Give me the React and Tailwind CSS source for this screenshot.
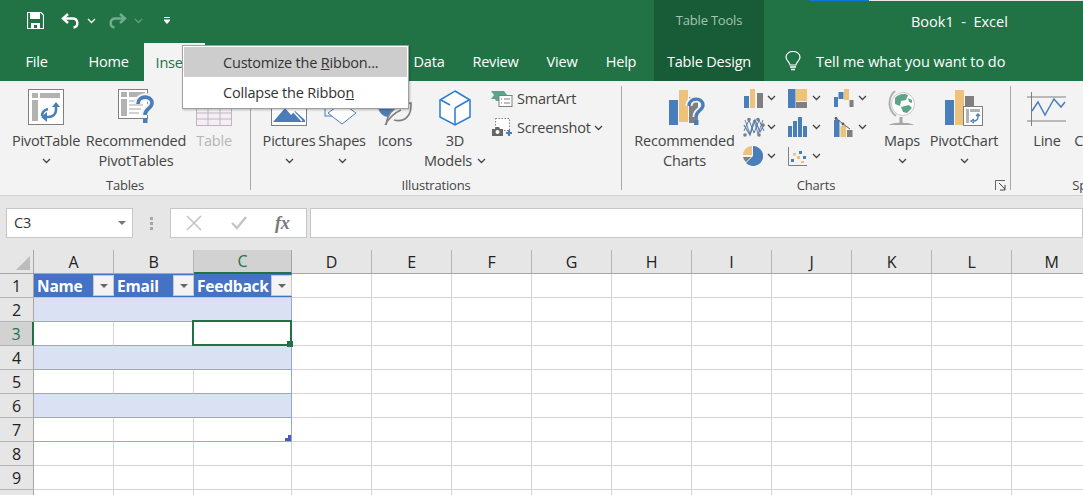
import React from "react";

const blue = "#4a7eba";
const gold = "#edc27b";
const gray = "#7f7f7f";

const Chev = ({ className = "", color = "#444" }) => (
  <svg width="9" height="6" viewBox="0 0 9 6" className={className}>
    <path d="M1 1l3.5 3.5L8 1" fill="none" stroke={color} strokeWidth="1.3" />
  </svg>
);

const SaveIcon = () => (
  <svg width="17" height="17" viewBox="0 0 17 17">
    <path d="M0.5 0.5h13.5l2.5 2.5v13.5h-16z" fill="none" stroke="#fff" strokeWidth="1.2" />
    <rect x="3" y="1" width="10" height="6" fill="#fff" />
    <path d="M4 16.5v-5.5h9v5.5h-3v-3.5h-3v3.5z" fill="#fff" />
  </svg>
);

const UndoIcon = ({ color = "#fff", flip = false, opacity = 1 }) => (
  <svg width="19" height="16" viewBox="0 0 19 16" opacity={opacity} className={flip ? "-scale-x-100" : ""}>
    <path d="M7 1L2 5.5 7 10" fill="none" stroke={color} strokeWidth="2.4" />
    <path d="M2.5 5.5h9c6 0 6.5 8 1 9" fill="none" stroke={color} strokeWidth="2.4" />
  </svg>
);

const PivotTableIcon = () => (
  <svg width="37" height="37" viewBox="0 0 37 37">
    <rect x="0.5" y="0.5" width="35" height="35" fill="#fff" stroke={gray} />
    <rect x="4" y="4" width="6" height="5" fill="#b2b2b2" />
    <rect x="12" y="4" width="20" height="5" fill="#b2b2b2" />
    <rect x="4" y="11" width="6" height="21" fill="#b2b2b2" />
    <path d="M28 15v6c0 4-3 7-8 7h-3" fill="none" stroke={blue} strokeWidth="2.6" />
    <path d="M24 18l4-5 4 5zM19 23l-6 5 6 5z" fill={blue} />
    <path d="M14 27c0-3 2-6 6-7" fill="none" stroke={blue} strokeWidth="2.6" />
  </svg>
);

const RecPivotIcon = () => (
  <svg width="37" height="37" viewBox="0 0 37 37">
    <rect x="0.5" y="0.5" width="29" height="29" fill="#fff" stroke={gray} />
    <rect x="3" y="3" width="6" height="5" fill="#b2b2b2" />
    <rect x="11" y="3" width="16" height="5" fill="#b2b2b2" />
    <rect x="3" y="10" width="6" height="17" fill="#b2b2b2" />
    <path d="M11 12h14M11 16h14M11 20h12M11 24h10" stroke="#c4c4c4" strokeWidth="1.5" />
    <path d="M20 15c0-9 14-9 14-1 0 6-7 5-7 12" fill="none" stroke="#f3f3f3" strokeWidth="8" />
    <path d="M20 15c0-9 14-9 14-1 0 6-7 5-7 12" fill="none" stroke={blue} strokeWidth="3.6" />
    <rect x="25" y="29" width="4.5" height="5" fill={blue} />
  </svg>
);

const TableIcon = () => (
  <svg width="36" height="28" viewBox="0 0 36 28">
    <rect x="0.5" y="0.5" width="35" height="27" fill="#f5eff5" stroke="#bdb6bd" />
    <path d="M0 9h36M0 15h36M0 21h36M12 5v23M24 5v23" stroke="#bdb6bd" />
  </svg>
);

const PicturesIcon = () => (
  <svg width="36" height="36" viewBox="0 0 36 36">
    <rect x="0.5" y="0.5" width="35" height="35" fill="#fff" stroke={gray} />
    <path d="M2 32l12-14 6 7 4-4 10 9v2H2z" fill={blue} />
    <path d="M20 19l11 12" stroke="#fff" strokeWidth="1.5" />
  </svg>
);

const ShapesIcon = () => (
  <svg width="36" height="36" viewBox="0 0 36 36">
    <rect x="1" y="10" width="16" height="16" fill="none" stroke={blue} />
    <path d="M18 13l14 10-14 11L4 23z" fill="#fff" stroke={blue} />
  </svg>
);

const IconsIcon = () => (
  <svg width="36" height="36" viewBox="0 0 36 36">
    <circle cx="12" cy="16" r="11" fill={blue} />
    <path d="M9 35C11 20 20 15 34 13c1 12-6 20-17 17" fill="#f3f3f3" stroke={gray} strokeWidth="1.6" />
    <path d="M8 35c4-7 9-12 16-15" fill="none" stroke={gray} strokeWidth="1.4" />
  </svg>
);

const CubeIcon = () => (
  <svg width="32" height="36" viewBox="0 0 32 36">
    <path d="M16 1l15 9v17l-15 8-15-8V10z" fill="#fff" stroke="#2b7cd3" strokeWidth="1.5" />
    <path d="M2 10l9 5M16 18l14-8M16 18v17" fill="none" stroke="#2b7cd3" strokeWidth="1.5" />
  </svg>
);

const SmartArtIcon = () => (
  <svg width="22" height="18" viewBox="0 0 22 18">
    <path d="M0 1h13l3 4h-8v6H5l-1-2H0l3-4z" fill="#5da48a" />
    <rect x="8" y="5.5" width="13" height="11" fill="#fff" stroke={gray} />
    <path d="M10 9h1M13 9h6M10 13h1M13 13h6" stroke={gray} />
  </svg>
);

const ScreenshotIcon = () => (
  <svg width="21" height="19" viewBox="0 0 21 19">
    <rect x="3.5" y="0.5" width="14" height="12" fill="#fff" stroke={gray} strokeDasharray="1.5 1.5" />
    <path d="M0 11h3l1-2h3l1 2h3v7H0z" fill="#666" />
    <circle cx="5.5" cy="14" r="2" fill="#fff" />
    <path d="M17 12v6M14 15h6" stroke={blue} strokeWidth="2" />
  </svg>
);

const RecChartIcon = () => (
  <svg width="37" height="37" viewBox="0 0 37 37" className="ml-[5px]">
    <rect x="0" y="11" width="9" height="25" fill={blue} />
    <rect x="10" y="1" width="9" height="32" fill={gold} />
    <rect x="20" y="8" width="9" height="26" fill={gray} />
    <path d="M20 17c0-9 14-9 14-1 0 6-7 5-7 12" fill="none" stroke="#f3f3f3" strokeWidth="7" />
    <path d="M20 17c0-9 14-9 14-1 0 6-7 5-7 12" fill="none" stroke={blue} strokeWidth="3.4" />
    <rect x="25" y="31" width="4.5" height="5" fill={blue} />
  </svg>
);

const Bars = ({ data }) => (
  <svg width="22" height="20" viewBox="0 0 22 20">
    {data.map(([x, y, w, c], i) => (
      <rect key={i} x={x} y={y} width={w} height={20 - y} fill={c} />
    ))}
  </svg>
);

const smallCharts = [
  [
    <Bars data={[[1, 8, 5, blue], [7, 1, 5, gold], [14, 5, 6, gray]]} />,
    <svg width="19" height="19" viewBox="0 0 19 19">
      <rect width="7.5" height="19" fill={blue} />
      <rect x="8" width="11" height="12" fill={gold} />
      <rect x="8" y="13" width="11" height="6" fill={gray} />
    </svg>,
    <svg width="20" height="18" viewBox="0 0 20 18">
      <rect x="0" y="8" width="4" height="10" fill={blue} />
      <rect x="4.5" y="3" width="5" height="7" fill={blue} />
      <rect x="10" y="0" width="5" height="11" fill={gold} />
      <rect x="15.5" y="11" width="4" height="7" fill={gray} />
    </svg>,
  ],
  [
    <svg width="22" height="20" viewBox="0 0 22 20">
      <path d="M2 3l5 14 4-14 4 14 5-14" fill="none" stroke={gray} />
      <path d="M1 8l6 10 5-15 5 12 4-7" fill="none" stroke={blue} strokeWidth="1.2" />
      <path d="M1 14l5-11 5 13 5-13 5 11" fill="none" stroke={blue} />
      <circle cx="6" cy="2.5" r="1.8" fill={gray} />
      <circle cx="15" cy="2.5" r="1.8" fill={gray} />
      <circle cx="20" cy="8" r="1.8" fill={gray} />
      <circle cx="2" cy="18" r="1.8" fill={gray} />
      <circle cx="16" cy="18" r="1.8" fill={gray} />
    </svg>,
    <Bars data={[[0, 9, 4, blue], [5, 4, 4, blue], [10, 0, 4, blue], [15, 9, 4, blue]]} />,
    <svg width="19" height="20" viewBox="0 0 19 20">
      <rect x="0" y="3" width="5.5" height="17" fill={blue} />
      <rect x="6.5" y="9" width="5.5" height="11" fill={gold} />
      <rect x="13" y="13" width="5.5" height="7" fill={gray} />
      <path d="M2 1l7 6 7 5" fill="none" stroke="#595959" />
      <circle cx="2" cy="1.5" r="1.4" fill="#595959" />
      <circle cx="9" cy="7" r="1.4" fill="#595959" />
    </svg>,
  ],
  [
    <svg width="20" height="20" viewBox="0 0 20 20">
      <path d="M10 0a10 10 0 1 1-7 17l7-7z" fill={blue} />
      <path d="M9 0v9H0a9 9 0 0 1 9-9z" fill={gold} />
      <path d="M0 11h8l-5 5a9 9 0 0 1-3-5z" fill={gray} />
    </svg>,
    <svg width="19" height="19" viewBox="0 0 19 19">
      <path d="M0.5 0v18.5H19" fill="none" stroke={gray} />
      <rect x="3" y="12" width="3" height="3" fill={blue} />
      <rect x="5" y="6" width="3" height="2.5" fill={gold} />
      <rect x="9" y="9" width="3" height="3" fill={gold} />
      <rect x="11" y="4" width="3" height="3" fill={blue} />
      <rect x="15" y="9" width="3" height="3" fill={blue} />
      <rect x="13" y="14" width="3" height="2" fill={gold} />
    </svg>,
    null,
  ],
];

const MapsIcon = () => (
  <svg width="30" height="36" viewBox="0 0 30 36">
    <circle cx="16" cy="14" r="11.5" fill="#fff" stroke="#c8c8c8" />
    <path d="M8 8c3-4 9-5 13-3l-2 5-5 1-1 5-5-2zM14 17l8-2 3 3-5 5-4-1zM21 8l4 2v3l-3-1z" fill="#5da48a" />
    <path d="M8 1C1 7 0 19 9 26" fill="none" stroke="#b0b0b0" strokeWidth="2" />
    <path d="M14 27v6" stroke="#a6a6a6" strokeWidth="3" />
    <path d="M2 35c3-3 21-3 25 0z" fill="#a6a6a6" />
  </svg>
);

const PivotChartIcon = () => (
  <svg width="39" height="37" viewBox="0 0 39 37">
    <rect x="0" y="11" width="9" height="25" fill={blue} />
    <rect x="10" y="1" width="9" height="35" fill={gold} />
    <rect x="20" y="7" width="9" height="29" fill={gray} />
    <rect x="18.5" y="17.5" width="19" height="19" fill="#fff" stroke={gray} />
    <rect x="21" y="20" width="3" height="14" fill="#b2b2b2" />
    <rect x="25" y="20" width="10" height="3" fill="#b2b2b2" />
    <path d="M33 25v3c0 3-2 4-5 4M31 27l2-2 2 2M29 30l-3 2 3 2" fill="none" stroke={blue} strokeWidth="1.4" />
  </svg>
);

const LineIcon = () => (
  <svg width="40" height="34" viewBox="0 0 40 34">
    <path d="M0 5h39M0 29h39M4.500 0v34" stroke={gray} />
    <path d="M5 21l6-9 7 13 9-16 7 8 4-5" transform="translate(0 -2)" fill="none" stroke={blue} strokeWidth="1.5" />
  </svg>
);

const Launcher = () => (
  <svg width="11" height="11" viewBox="0 0 11 11">
    <path d="M0.5 10V0.5H10" fill="none" stroke="#666" />
    <path d="M4 3l6 6M10 5v5H5" fill="none" stroke="#444" />
  </svg>
);

const Bulb = () => (
  <svg width="16" height="20" viewBox="0 0 16 20">
    <path d="M5 14c0-3-4-4-4-8a7 5.500 0 0 1 14 0c0 4-4 5-4 8z" fill="none" stroke="#fff" strokeWidth="1.2" />
    <path d="M5 16h6M6 18.500h4" stroke="#fff" strokeWidth="1.4" />
  </svg>
);

const Tab = ({ w, children, className = "" }) => (
  <div className={`flex items-center justify-center pt-[2px] ${w} ${className}`}>{children}</div>
);

// a large ribbon button: icon on top, then one or two lines of label
const BigButton = ({ w, icon, lines, chev, chevInline, dim, className = "" }) => (
  <div className={`flex flex-col items-center shrink-0 ${w} ${className}`}>
    <div className="h-[40px] flex items-end justify-center">{icon}</div>
    <div className={`h-[20px] mt-[5px] leading-[20px] whitespace-nowrap ${dim ? "text-[#b5b5b5]" : ""}`}>{lines[0]}</div>
    {lines[1] && (
      <div className="h-[20px] leading-[20px] flex items-center gap-[5px] whitespace-nowrap">
        {lines[1]}
        {chevInline && <Chev />}
      </div>
    )}
    {chev && <Chev className="mt-[7px]" />}
  </div>
);

const Group = ({ w, label, children, launcher }) => (
  <div className={`relative shrink-0 flex flex-col h-[104px] border-r border-[#a8a8a8] ${w}`}>
    <div className="flex flex-1">{children}</div>
    <div className="relative text-center text-[13px] leading-[10px] h-[10px]">
      {label}
      {launcher && <span className="absolute right-[4px] top-0"><Launcher /></span>}
    </div>
  </div>
);

const columns = ["A", "B", "C", "D", "E", "F", "G", "H", "I", "J", "K", "L", "M"];
const headers = ["Name", "Email", "Feedback"];
const rows = [1, 2, 3, 4, 5, 6, 7, 8, 9, 10];

const FilterButton = () => (
  <span className="absolute right-0 top-px w-[21px] h-[21px] bg-[#f3f3f3] border border-[#c8c8c8] flex items-center justify-center">
    <span className="w-0 h-0 border-x-[4px] border-x-transparent border-t-[4px] border-t-[#666]" />
  </span>
);

const Cell = ({ r, c }) => {
  const inTable = c < 3 && r <= 7;
  if (r === 1 && c < 3) {
    return (
      <div className="relative bg-[#4472c4] text-white text-[15.5px] font-bold pl-[3px] leading-[24px] border-b border-[#c6c6c6] whitespace-nowrap">
        {headers[c]}
        <FilterButton />
      </div>
    );
  }
  if (inTable) {
    const band = r % 2 === 0;
    return (
      <div
        className={`relative border-b border-[#8ea9db] ${band ? "bg-[#d9e1f2]" : "bg-white"} ${
          c === 2 ? "border-r border-r-[#8ea9db]" : band ? "" : "border-r border-r-[#d4d4d4]"
        }`}
      >
        {r === 3 && c === 2 && (
          <div className="absolute -left-[2px] -top-[2px] -right-[1px] -bottom-[1px] z-10 border-2 border-[#217346]">
            <span className="absolute -right-[3px] -bottom-[3px] w-[6px] h-[6px] bg-[#217346]" />
          </div>
        )}
        {r === 7 && c === 2 && (
          <svg width="6" height="6" viewBox="0 0 6 6" className="absolute right-0 bottom-0">
            <path d="M3 0h3v6H0V3h3z" fill="#4a5bb5" />
          </svg>
        )}
      </div>
    );
  }
  return <div className="border-r border-b border-[#d4d4d4] bg-white" />;
};

export default function App() {
  return (
    <div className="w-[1083px] h-[495px] overflow-hidden relative bg-white text-[14.5px] text-[#444] font-['Segoe_UI','Open_Sans',sans-serif] tracking-[-0.2px]">
      {/* Title bar */}
      <div className="relative h-[41px] bg-[#217346] flex items-center text-white">
        <div className="absolute top-0 left-[809px] w-[60px] h-px bg-[#0a78d4]" />
        <div className="absolute top-0 left-[869px] right-0 h-px bg-[#e8e8e8]" />
        <div className="w-[654px] flex items-center pl-[27px]">
          <SaveIcon />
          <div className="ml-[17px]"><UndoIcon /></div>
          <Chev className="ml-[7px]" color="#fff" />
          <div className="ml-[12px]"><UndoIcon flip color="#6fae8e" /></div>
          <Chev className="ml-[7px]" color="#5d9f7f" />
          <svg width="6" height="7" viewBox="0 0 6 7" className="ml-[21px]">
            <path d="M0 0.500h6M0 3h6l-3 3.500z" stroke="#fff" fill="#fff" strokeWidth="1" />
          </svg>
        </div>
        <div className="w-[110px] h-full bg-[#185c37] text-[#a3c4b2] text-[13px] flex items-center justify-center">
          Table Tools
        </div>
        <div className="ml-[147px] pt-[2px] whitespace-pre tracking-normal">Book1  -  Excel</div>
      </div>

      {/* Tabs */}
      <div className="h-[40px] bg-[#217346] flex text-white">
        <Tab w="w-[73px]">File</Tab>
        <Tab w="w-[71px]">Home</Tab>
        <Tab w="w-[61px]" className="mt-[2px] pt-0 bg-[#f3f3f3] text-[#217346]">Insert</Tab>
        <div className="w-[195px]" />
        <Tab w="w-[58px]">Data</Tab>
        <Tab w="w-[75px]">Review</Tab>
        <Tab w="w-[58px]">View</Tab>
        <Tab w="w-[60px]">Help</Tab>
        <Tab w="w-[110px] ml-[3px]" className="bg-[#185c37]">Table Design</Tab>
        <div className="ml-[21px] flex items-center"><Bulb /></div>
        <div className="ml-[15px] pt-[2px] flex items-center tracking-[-0.05px]">Tell me what you want to do</div>
      </div>

      {/* Ribbon */}
      <div className="h-[115px] bg-[#f3f3f3] border-b border-[#d2d2d2] flex pt-[5px] overflow-hidden">
        <Group w="w-[251px]" label="Tables">
          <div className="pl-[6px] flex">
            <BigButton w="w-[80px]" icon={<PivotTableIcon />} lines={["PivotTable"]} chev />
            <BigButton w="w-[100px]" icon={<RecPivotIcon />} lines={["Recommended", "PivotTables"]} />
            <BigButton w="w-[56px]" icon={<TableIcon />} lines={["Table"]} dim />
          </div>
        </Group>
        <Group w="w-[371px]" label="Illustrations">
          <div className="pl-[8px] flex">
            <BigButton w="w-[60px]" icon={<PicturesIcon />} lines={["Pictures"]} chev />
            <BigButton w="w-[46px]" icon={<ShapesIcon />} lines={["Shapes"]} chev />
            <BigButton w="w-[60px]" icon={<IconsIcon />} lines={["Icons"]} />
            <BigButton w="w-[60px]" icon={<CubeIcon />} lines={["3D", "Models"]} chevInline />
            <div className="ml-[6px] flex flex-col pt-[3px] gap-[10px]">
              <div className="h-[19px] flex items-center gap-[4px]">
                <SmartArtIcon />
                SmartArt
              </div>
              <div className="h-[19px] flex items-center gap-[4px] pl-[1px]">
                <ScreenshotIcon />
                Screenshot
                <Chev className="-ml-[1px]" />
              </div>
            </div>
          </div>
        </Group>
        <Group w="w-[389px]" label="Charts" launcher>
          <div className="pl-[12px] flex">
            <BigButton w="w-[101px]" icon={<RecChartIcon />} lines={["Recommended", "Charts"]} />
            <div className="ml-[8px] flex flex-col gap-[9px] pt-[2px]">
              {smallCharts.map((row, i) => (
                <div key={i} className="flex h-[20px] items-center">
                  {row.map((icon, j) => (
                    <div key={j} className={`flex items-center ${j === 0 ? "w-[45px]" : "w-[46px]"}`}>
                      {icon && <div className="w-[23px] flex">{icon}</div>}
                      {icon && <Chev className="ml-[1px]" />}
                    </div>
                  ))}
                </div>
              ))}
            </div>
            <BigButton w="w-[44px]" icon={<MapsIcon />} lines={["Maps"]} chev />
            <BigButton w="w-[76px]" icon={<PivotChartIcon />} lines={["PivotChart"]} chev className="ml-[2px]" />
          </div>
        </Group>
        <Group w="w-[184px]" label="Sparklines">
          <div className="pl-[11px] flex">
            <BigButton w="w-[50px]" icon={<LineIcon />} lines={["Line"]} />
            <BigButton w="w-[50px]" icon={<div className="w-[30px]" />} lines={["Column"]} className="ml-[3px]" />
          </div>
        </Group>
      </div>

      {/* Formula bar */}
      <div className="h-[54px] bg-[#e6e6e6] flex items-start pt-[12px]">
        <div className="ml-[6px] w-[127px] h-[30px] bg-white border border-[#c6c6c6] flex items-center justify-between pl-[7px] pr-[6px] text-[#333]">
          C3
          <span className="w-0 h-0 border-x-[4px] border-x-transparent border-t-[4px] border-t-[#777]" />
        </div>
        <div className="w-[37px] h-[30px] flex flex-col items-center justify-center gap-[2px]">
          <span className="w-[3px] h-[3px] bg-[#a6a6a6]" />
          <span className="w-[3px] h-[3px] bg-[#a6a6a6]" />
          <span className="w-[3px] h-[3px] bg-[#a6a6a6]" />
        </div>
        <div className="w-[137px] h-[30px] bg-white border border-[#c6c6c6] flex items-center">
          <svg width="16" height="16" viewBox="0 0 16 16" className="ml-[15px]">
            <path d="M1 1l14 14M15 1L1 15" stroke="#c4c4c4" strokeWidth="1.6" />
          </svg>
          <svg width="16" height="14" viewBox="0 0 16 14" className="ml-[29px]">
            <path d="M1 7l5 5 9-11" fill="none" stroke="#c4c4c4" strokeWidth="2.4" />
          </svg>
          <span className="ml-[28px] font-['Liberation_Serif',serif] italic font-bold text-[18px] text-[#777]">fx</span>
        </div>
        <div className="ml-[3px] flex-1 h-[30px] bg-white border border-[#c6c6c6]" />
      </div>

      {/* Sheet grid */}
      <div className="grid grid-cols-[34px_80px_80px_98px_repeat(10,80px)] grid-rows-[24px_repeat(10,24px)] text-[16px] text-[#222]">
        <div className="relative bg-[#e6e6e6] border-r border-b border-[#a6a6a6]">
          <span className="absolute right-[3px] bottom-[3px] w-0 h-0 border-l-[14px] border-l-transparent border-b-[14px] border-b-[#bcbcbc]" />
        </div>
        {columns.map((c) => (
          <div
            key={c}
            className={`flex items-center justify-center border-r ${
              c === "C"
                ? "bg-[#d2d2d2] text-[#217346] border-b-2 border-b-[#217346] border-r-[#a6a6a6]"
                : "bg-[#e6e6e6] border-b border-[#a6a6a6] border-r-[#b4b4b4]"
            }`}
          >
            {c}
          </div>
        ))}
        {rows.map((r) => (
          <React.Fragment key={r}>
            <div
              className={`flex items-center justify-center pt-px border-b border-b-[#b4b4b4] ${
                r === 3
                  ? "bg-[#d2d2d2] text-[#217346] border-r-2 border-r-[#217346]"
                  : "bg-[#e6e6e6] border-r border-r-[#a6a6a6]"
              }`}
            >
              {r < 10 ? r : ""}
            </div>
            {columns.map((_, c) => (
              <Cell key={c} r={r} c={c} />
            ))}
          </React.Fragment>
        ))}
      </div>

      {/* Ribbon context menu */}
      <div className="absolute left-[182px] top-[45px] w-[227px] h-[64px] bg-white border border-[#a0a0a0] p-px shadow-[1px_1px_2px_rgba(0,0,0,0.25)] text-[#333]">
        <div className="h-[30px] bg-[#cdcdcd] flex items-center pl-[39px] pt-[2px]">
          <span>Customize the <u>R</u>ibbon...</span>
        </div>
        <div className="h-[30px] flex items-center pl-[39px] pt-[2px]">
          <span>Collapse the Ribbo<u>n</u></span>
        </div>
      </div>
    </div>
  );
}
